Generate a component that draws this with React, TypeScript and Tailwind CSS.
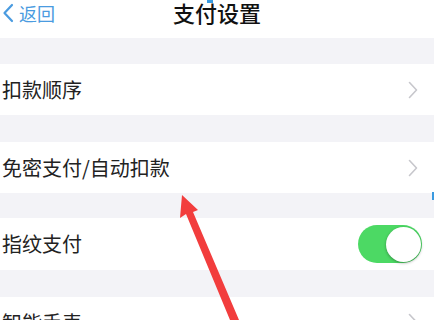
import React from 'react';

const Chevron = () => (
  <svg width="10" height="18" viewBox="0 0 10 18" fill="none" className="shrink-0">
    <path d="M1.5 1.5L8.5 9L1.5 16.5" stroke="#c7c7cc" strokeWidth="1.6" strokeLinecap="round" strokeLinejoin="round" />
  </svg>
);

const Row: React.FC<{ label: string; h: string; children?: React.ReactNode }> = ({ label, h, children }) => (
  <div className={`flex ${h} items-center justify-between bg-white pl-[2px] pr-[16px]`}>
    <span className="text-[20px] leading-none text-[#222]">{label}</span>
    {children ?? <Chevron />}
  </div>
);

const Toggle = () => (
  <div className="mr-[-4px] flex h-[38px] w-[64px] items-center justify-end rounded-full bg-[#4cd964] pr-[1px]">
    <div className="h-[35px] w-[35px] rounded-full bg-white shadow-[0_1px_3px_rgba(0,0,0,0.35)]" />
  </div>
);

export default function App() {
  return (
    <div
      className="relative h-[320px] w-[434px] overflow-hidden bg-[#f3f3f7]"
      style={{ fontFamily: '"Noto Sans CJK SC", "Noto Sans", sans-serif' }}
    >
      <header className="relative flex h-[38px] items-start bg-white">
        <div className="flex items-center pl-[2px] pt-[2px] text-[#4a9be0]">
          <svg width="12" height="20" viewBox="0 0 12 20" fill="none">
            <path d="M10 2L2.5 10L10 18" stroke="#4a9be0" strokeWidth="2.2" strokeLinecap="round" strokeLinejoin="round" />
          </svg>
          <span className="ml-[5px] text-[18px] leading-[22px]">返回</span>
        </div>
        <h1 className="absolute left-0 right-0 top-[-1px] text-center text-[22px] font-medium leading-[26px] text-[#111]">
          支付设置
        </h1>
      </header>

      <div className="h-[26px]" />
      <Row label="扣款顺序" h="h-[51px]" />
      <div className="h-[27px]" />
      <Row label="免密支付/自动扣款" h="h-[51px]" />
      <div className="h-[25px]" />
      <Row label="指纹支付" h="h-[52px]">
        <Toggle />
      </Row>
      <div className="h-[27px]" />
      <div className="flex h-[40px] items-start justify-between bg-white pl-[2px] pr-[16px] pt-[16px]">
        <span className="text-[20px] leading-none text-[#222]">智能手表</span>
        <Chevron />
      </div>

      {/* red annotation arrow */}
      <svg className="pointer-events-none absolute left-0 top-0" width="434" height="320" viewBox="0 0 434 320">
        <polygon
          points="182,195 198,210 193,212 239,320 230,320 186,214 180,218"
          fill="#f23d3d"
        />
      </svg>

      {/* stray blue marks */}
      <div className="absolute left-[207px] top-0 h-[3px] w-[6px] bg-[#3a9ae0]" />
      <div className="absolute right-0 top-[192px] h-[8px] w-[2px] bg-[#3a9ae0]" />
    </div>
  );
}
